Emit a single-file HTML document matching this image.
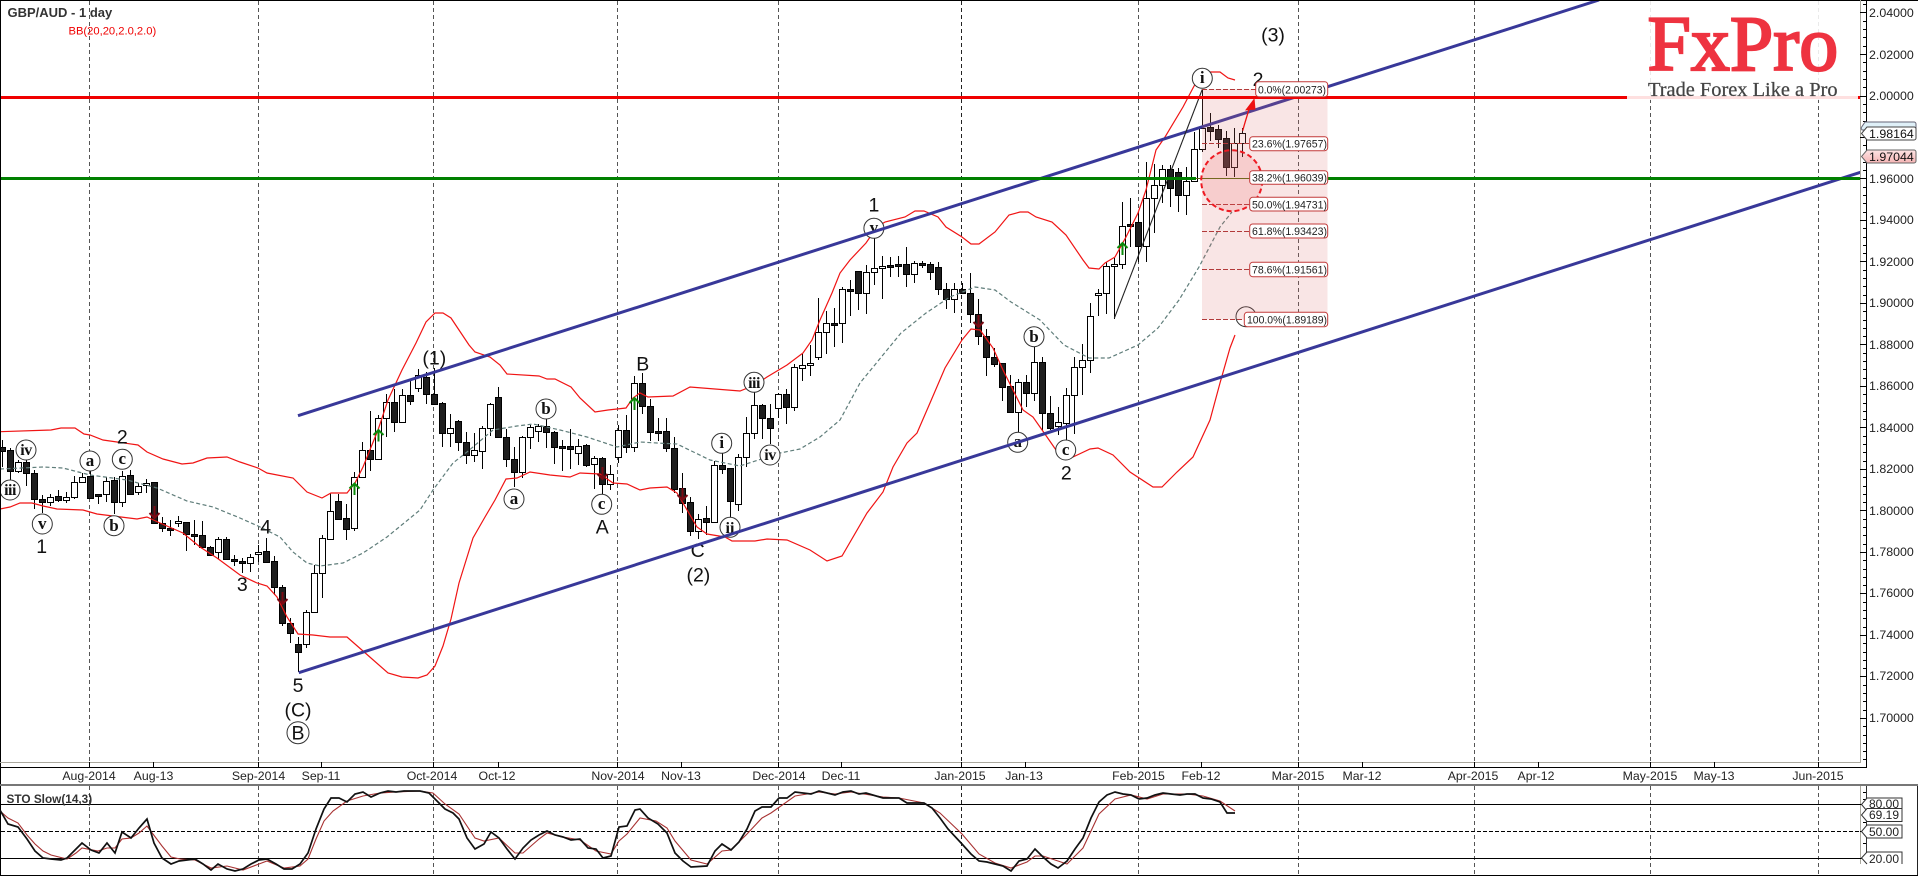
<!DOCTYPE html>
<html><head><meta charset="utf-8"><title>GBP/AUD - 1 day</title>
<style>
html,body{margin:0;padding:0;background:#fff;width:1918px;height:876px;overflow:hidden}
svg{display:block}
text{font-family:"Liberation Sans",Arial,sans-serif;fill:#111}
.ax{font-size:12.4px;fill:#222}
.dt{font-size:12.3px;text-anchor:middle;fill:#222}
.big{font-size:19.5px;text-anchor:middle;fill:#111}
.c{font-family:"Liberation Serif",serif;font-weight:bold;font-size:17px;text-anchor:middle;fill:#111}
.f{font-size:11px;fill:#222}
</style></head><body>
<svg width="1918" height="876" viewBox="0 0 1918 876" xmlns="http://www.w3.org/2000/svg">
<rect width="1918" height="876" fill="#fff"/>
<!-- grid -->
<g stroke="#555" stroke-width="1" stroke-dasharray="4 3" shape-rendering="crispEdges" fill="none">
<path d="M89.5 1V762M258.5 1V762M433.5 1V762M617.5 1V762M778.5 1V762M1138.5 1V762M1298.5 1V762M1474.5 1V762M1650.5 1V762M1818.5 1V762"/>
<path d="M89.5 786V874M258.5 786V874M433.5 786V874M617.5 786V874M778.5 786V874M1138.5 786V874M1298.5 786V874M1474.5 786V874M1650.5 786V874M1818.5 786V874"/>
<path stroke="#222" d="M961.5 1V762M961.5 786V874"/>
</g>
<!-- candles -->
<path fill="none" stroke="#000" stroke-width="1" shape-rendering="crispEdges" d="M2.5 440V467M10.5 448V480M18.5 460V473M26.5 458V486M34.5 470V509M42.5 495V513M50.5 494V506M58.5 490V502M66.5 492V503M74.5 476V499M82.5 473V483M90.5 470V499M98.5 494V504M106.5 477V502M114.5 477V514M122.5 471V507M130.5 470V495M138.5 483V495M146.5 479V493M154.5 482V524M162.5 517V532M170.5 520V536M178.5 516V527M186.5 522V551M194.5 520V545M202.5 521V547M210.5 546V556M218.5 537V559M226.5 537V560M234.5 555V566M242.5 558V573M250.5 554V572M258.5 545V562M266.5 538V563M274.5 556V595M282.5 585V626M290.5 618V643M298.5 637V672M306.5 610V648M314.5 565V613M322.5 535V598M330.5 493V540M338.5 494V520M346.5 504V540M354.5 472V531M362.5 442V478M370.5 411V471M378.5 415V460M386.5 394V437M394.5 389V432M402.5 389V423M410.5 380V405M418.5 369V392M426.5 372V404M434.5 368V405M442.5 402V447M450.5 414V447M458.5 420V451M466.5 432V464M474.5 433V462M482.5 426V469M490.5 403V436M498.5 387V438M506.5 429V467M514.5 447V487M522.5 436V478M530.5 425V449M538.5 424V442M546.5 418V448M554.5 431V464M562.5 440V471M570.5 429V469M578.5 439V465M586.5 444V467M594.5 456V489M602.5 457V495M610.5 465V490M618.5 425V463M626.5 415V453M634.5 376V452M642.5 373V414M650.5 399V441M658.5 418V441M666.5 418V452M674.5 437V493M682.5 473V513M690.5 497V536M698.5 514V539M706.5 506V535M714.5 461V523M722.5 453V474M730.5 468V517M738.5 454V511M746.5 417V467M754.5 392V439M762.5 404V439M770.5 404V444M778.5 393V418M786.5 389V424M794.5 364V411M802.5 354V381M810.5 345V376M818.5 298V360M826.5 311V354M834.5 308V347M842.5 287V343M850.5 280V316M858.5 271V310M866.5 265V314M874.5 218V285M882.5 256V299M890.5 257V277M898.5 256V277M906.5 247V287M914.5 261V283M922.5 261V268M930.5 262V280M938.5 262V295M946.5 283V309M954.5 283V313M962.5 283V294M970.5 273V323M978.5 299V345M986.5 329V376M994.5 348V367M1002.5 363V401M1010.5 375V413M1018.5 379V432M1026.5 375V407M1034.5 347V401M1042.5 357V430M1050.5 396V430M1058.5 407V435M1066.5 388V440M1074.5 357V434M1082.5 344V395M1090.5 303V373M1098.5 289V316M1106.5 262V314M1114.5 258V319M1122.5 202V269M1130.5 198V247M1138.5 212V262M1146.5 162V262M1154.5 164V233M1162.5 165V203M1170.5 165V207M1178.5 168V212M1186.5 167V215M1194.5 132V182M1202.5 89V152M1210.5 113V141M1218.5 125V148M1226.5 131V176M1234.5 128V177M1242.5 128V157"/>
<path fill="#fff" stroke="#000" stroke-width="1" shape-rendering="crispEdges" d="M15.5 462.5h6V471.5h-6zM47.5 497.5h6V502.5h-6zM63.5 497.5h6V500.5h-6zM71.5 482.5h6V497.5h-6zM79.5 477.5h6V482.5h-6zM103.5 481.5h6V494.5h-6zM119.5 476.5h6V502.5h-6zM135.5 486.5h6V492.5h-6zM143.5 483.5h6V485.5h-6zM175.5 521.5h6V523.5h-6zM215.5 539.5h6V552.5h-6zM247.5 557.5h6V563.5h-6zM255.5 552.5h6V554.5h-6zM303.5 612.5h6V644.5h-6zM311.5 573.5h6V612.5h-6zM319.5 538.5h6V573.5h-6zM327.5 511.5h6V539.5h-6zM351.5 477.5h6V528.5h-6zM359.5 450.5h6V477.5h-6zM375.5 418.5h6V459.5h-6zM383.5 402.5h6V418.5h-6zM399.5 395.5h6V422.5h-6zM415.5 375.5h6V388.5h-6zM447.5 428.5h6V433.5h-6zM471.5 450.5h6V455.5h-6zM479.5 428.5h6V451.5h-6zM487.5 404.5h6V428.5h-6zM519.5 437.5h6V472.5h-6zM527.5 427.5h6V437.5h-6zM535.5 426.5h6V431.5h-6zM575.5 446.5h6V453.5h-6zM591.5 458.5h6V464.5h-6zM607.5 474.5h6V484.5h-6zM615.5 430.5h6V457.5h-6zM631.5 383.5h6V447.5h-6zM695.5 519.5h6V531.5h-6zM711.5 465.5h6V522.5h-6zM735.5 457.5h6V504.5h-6zM743.5 433.5h6V457.5h-6zM751.5 405.5h6V433.5h-6zM775.5 394.5h6V408.5h-6zM791.5 367.5h6V407.5h-6zM799.5 365.5h6V368.5h-6zM807.5 363.5h6V365.5h-6zM815.5 332.5h6V357.5h-6zM823.5 323.5h6V332.5h-6zM839.5 289.5h6V323.5h-6zM863.5 272.5h6V293.5h-6zM871.5 268.5h6V272.5h-6zM879.5 266.5h6V268.5h-6zM911.5 263.5h6V274.5h-6zM951.5 289.5h6V299.5h-6zM1015.5 382.5h6V412.5h-6zM1031.5 362.5h6V393.5h-6zM1055.5 422.5h6V426.5h-6zM1063.5 395.5h6V423.5h-6zM1071.5 367.5h6V395.5h-6zM1079.5 360.5h6V367.5h-6zM1087.5 316.5h6V360.5h-6zM1095.5 293.5h6V295.5h-6zM1103.5 266.5h6V293.5h-6zM1111.5 264.5h6V266.5h-6zM1119.5 226.5h6V264.5h-6zM1143.5 198.5h6V246.5h-6zM1151.5 185.5h6V198.5h-6zM1159.5 169.5h6V185.5h-6zM1183.5 181.5h6V195.5h-6zM1191.5 149.5h6V181.5h-6zM1199.5 128.5h6V149.5h-6zM1231.5 143.5h6V167.5h-6zM1239.5 133.5h6V143.5h-6z"/>
<path fill="#1e1e1e" stroke="#000" stroke-width="1" shape-rendering="crispEdges" d="M-.5 447.5h6V451.5h-6zM7.5 450.5h6V471.5h-6zM23.5 462.5h6V473.5h-6zM31.5 473.5h6V499.5h-6zM39.5 499.5h6V502.5h-6zM55.5 496.5h6V500.5h-6zM87.5 476.5h6V498.5h-6zM95.5 494.5h6V496.5h-6zM111.5 480.5h6V502.5h-6zM127.5 475.5h6V494.5h-6zM151.5 482.5h6V523.5h-6zM159.5 523.5h6V528.5h-6zM167.5 528.5h6V530.5h-6zM183.5 522.5h6V534.5h-6zM191.5 534.5h6V536.5h-6zM199.5 535.5h6V547.5h-6zM207.5 547.5h6V555.5h-6zM223.5 539.5h6V559.5h-6zM231.5 559.5h6V561.5h-6zM239.5 561.5h6V563.5h-6zM263.5 551.5h6V562.5h-6zM271.5 561.5h6V587.5h-6zM279.5 587.5h6V623.5h-6zM287.5 623.5h6V633.5h-6zM295.5 644.5h6V652.5h-6zM335.5 501.5h6V519.5h-6zM343.5 518.5h6V529.5h-6zM367.5 450.5h6V459.5h-6zM391.5 402.5h6V422.5h-6zM407.5 395.5h6V401.5h-6zM423.5 377.5h6V394.5h-6zM431.5 394.5h6V404.5h-6zM439.5 403.5h6V433.5h-6zM455.5 421.5h6V442.5h-6zM463.5 442.5h6V455.5h-6zM495.5 397.5h6V437.5h-6zM503.5 437.5h6V459.5h-6zM511.5 459.5h6V472.5h-6zM543.5 426.5h6V432.5h-6zM551.5 432.5h6V447.5h-6zM559.5 446.5h6V448.5h-6zM567.5 446.5h6V449.5h-6zM583.5 445.5h6V465.5h-6zM599.5 458.5h6V484.5h-6zM623.5 430.5h6V447.5h-6zM639.5 383.5h6V406.5h-6zM647.5 406.5h6V432.5h-6zM655.5 431.5h6V433.5h-6zM663.5 431.5h6V448.5h-6zM671.5 448.5h6V489.5h-6zM679.5 488.5h6V503.5h-6zM687.5 502.5h6V531.5h-6zM703.5 518.5h6V522.5h-6zM719.5 465.5h6V469.5h-6zM727.5 468.5h6V501.5h-6zM759.5 405.5h6V418.5h-6zM767.5 418.5h6V428.5h-6zM783.5 394.5h6V407.5h-6zM831.5 323.5h6V325.5h-6zM847.5 289.5h6V291.5h-6zM855.5 271.5h6V293.5h-6zM887.5 265.5h6V267.5h-6zM895.5 264.5h6V266.5h-6zM903.5 264.5h6V274.5h-6zM919.5 263.5h6V265.5h-6zM927.5 264.5h6V272.5h-6zM935.5 267.5h6V289.5h-6zM943.5 289.5h6V299.5h-6zM959.5 289.5h6V293.5h-6zM967.5 293.5h6V314.5h-6zM975.5 314.5h6V336.5h-6zM983.5 336.5h6V357.5h-6zM991.5 357.5h6V364.5h-6zM999.5 363.5h6V387.5h-6zM1007.5 386.5h6V412.5h-6zM1023.5 382.5h6V393.5h-6zM1039.5 362.5h6V413.5h-6zM1047.5 413.5h6V428.5h-6zM1127.5 224.5h6V226.5h-6zM1135.5 222.5h6V246.5h-6zM1167.5 169.5h6V188.5h-6zM1175.5 172.5h6V195.5h-6zM1207.5 127.5h6V131.5h-6zM1215.5 129.5h6V139.5h-6zM1223.5 138.5h6V167.5h-6z"/>
<!-- Bollinger -->
<polyline fill="none" stroke="#5f7d7a" stroke-width="1.2" stroke-dasharray="4 2.5" points="0,469 43,467 63,468 90,475 127,480 157,488 187,501 213,507 240,518 258,526 280,537 293,552 307,563 320,566 343,563 363,553 387,537 420,510 433,490 453,463 467,452 493,430 517,426 533,424 560,430 587,437 617,447 640,442 657,443 677,444 710,460 740,466 780,453 800,449 820,437 840,420 860,383 901,333 926,313 950,297 975,287 995,290 1011,302 1040,320 1064,345 1089,358 1109,358 1138,345 1158,328 1179,300 1199,267 1220,227 1232,212"/>
<g fill="none" stroke="#f01414" stroke-width="1.2">
<polyline points="0,431.7 51,430 61,428 75,428 84,434 90,435 103,440 117,442 138,445 147,452 163,459 182,464 193,463 207,458 227,457 240,462 258,468 267,473 293,478 307,492 322,498 331,493 347,493 355,483 363,467 378,430 388,400 402,370 416,343 426,322 435,313 443,313 451,318 459,330 469,345 475,352 490,357 500,365 507,374 539,376 547,379 555,379 571,387 580,398 595,412 608,410 626,408 633,398 640,393 648,397 673,396 690,387 740,391 755,385 767,377 787,365 803,353 812,340 820,320 832,293 840,273 850,260 866,243 877,227 885,222 905,217 915,211 924,211 938,217 946,227 962,237 971,244 979,244 995,232 1009,215 1020,212 1028,212 1036,217 1052,222 1066,235 1083,260 1089,268 1099,269 1105,263 1115,257 1126,237 1138,213 1146,190 1156,150 1165,137 1183,107 1193,88 1202,72 1211,72 1220,72 1228,78 1235,80"/>
<polyline points="0,509 10,507 20,503 32,503 43,506 57,509 83,510 97,514 113,516 137,519 147,517 160,523 183,533 200,547 217,558 240,575 257,583 267,586 277,597 287,617 298,634 313,635 330,637 347,637 363,651 388,673 402,677 418,678 427,675 435,666 443,646 451,619 459,583 473,538 485,517 495,500 506,479 517,478 530,472 550,475 570,477 580,473 600,474 613,483 627,484 640,490 650,488 667,487 677,493 683,503 697,527 707,534 725,537 732,541 755,541 767,539 787,540 810,550 827,561 842,556 867,513 883,492 893,467 907,443 917,433 930,403 945,368 962,340 971,329 980,330 993,348 1003,370 1023,410 1033,417 1047,437 1056,450 1073,457 1090,449 1098,448 1113,455 1130,472 1153,487 1162,487 1177,472 1193,457 1210,420 1220,383 1230,348 1235,335"/>
</g>
<!-- arrows -->
<g fill="none" stroke="#0b8a0b" stroke-width="2">
<path d="M354.5 495V483M349.5 488.5L354.5 483.5L359.5 488.5"/>
<path d="M378.5 441.5V430M373.5 435L378.5 430L383.5 435"/>
<path d="M634.5 410V398M629.5 403L634.5 398L639.5 403"/>
<path d="M1122.5 255V243M1117.5 248L1122.5 243L1127.5 248"/>
</g>
<g fill="none" stroke="#7a0a14" stroke-width="2">
<path d="M154.5 506V518M149.5 513L154.5 518L159.5 513"/>
<path d="M282.5 592V604M277.5 599L282.5 604L287.5 599"/>
<path d="M602.5 467V479M597.5 474L602.5 479L607.5 474"/>
<path d="M682.5 488V500M677.5 495L682.5 500L687.5 495"/>
<path d="M978.5 315V327M973.5 322L978.5 327L983.5 322"/>
</g>
<!-- wave circles -->
<g fill="#fff" stroke="#333" stroke-width="1">
<circle cx="26" cy="450" r="10"/><circle cx="10" cy="490" r="10"/><circle cx="42.3" cy="524" r="10"/><circle cx="90" cy="461" r="10"/><circle cx="122.3" cy="459.3" r="10"/><circle cx="114" cy="525.7" r="10"/><circle cx="298" cy="732.7" r="11"/><circle cx="514" cy="499" r="10"/><circle cx="546" cy="409" r="10"/><circle cx="601.7" cy="504.3" r="10"/><circle cx="721.7" cy="443.3" r="10"/><circle cx="754" cy="382.3" r="10"/><circle cx="730" cy="527.3" r="10"/><circle cx="770" cy="455" r="10"/><circle cx="873.9" cy="228.3" r="10"/><circle cx="1017.7" cy="442.3" r="10"/><circle cx="1034" cy="336.7" r="10"/><circle cx="1065.7" cy="450" r="10"/><circle cx="1202.3" cy="78.3" r="10"/><circle cx="1246" cy="316.7" r="10"/>
</g>
<g class="w">
<text class="c" x="26" y="455" style="font-size:16px" letter-spacing="-.5">iv</text>
<text class="c" x="10" y="495" style="font-size:16px" letter-spacing="-.5">iii</text>
<text class="c" x="42.3" y="529">v</text>
<text class="c" x="90" y="466">a</text>
<text class="c" x="122.3" y="464">c</text>
<text class="c" x="114" y="531">b</text>
<text class="c" x="514" y="504">a</text>
<text class="c" x="546" y="414">b</text>
<text class="c" x="601.7" y="509">c</text>
<text class="c" x="721.7" y="448">i</text>
<text class="c" x="754" y="388" style="font-size:16px" letter-spacing="-.5">iii</text>
<text class="c" x="730" y="533" style="font-size:16px">ii</text>
<text class="c" x="770" y="460" style="font-size:16px" letter-spacing="-.5">iv</text>
<text class="c" x="873.9" y="233">v</text>
<text class="c" x="1017.7" y="447">a</text>
<text class="c" x="1034" y="342">b</text>
<text class="c" x="1065.7" y="455">c</text>
<text class="c" x="1202.3" y="83">i</text>
<text class="big" x="298" y="739.5">B</text>
<text class="big" x="41.7" y="553">1</text>
<text class="big" x="122.3" y="443.7">2</text>
<text class="big" x="242.3" y="591">3</text>
<text class="big" x="265.7" y="533.7">4</text>
<text class="big" x="298" y="692">5</text>
<text class="big" x="298" y="716.3">(C)</text>
<text class="big" x="434.3" y="364.3">(1)</text>
<text class="big" x="602.3" y="533.7">A</text>
<text class="big" x="642.7" y="370.3">B</text>
<text class="big" x="697.7" y="557">C</text>
<text class="big" x="698.4" y="581.3">(2)</text>
<text class="big" x="873.9" y="211.3">1</text>
<text class="big" x="1066.3" y="479.7">2</text>
<text class="big" x="1258" y="86">2</text>
<text class="big" x="1273" y="41.5">(3)</text>
</g>
<!-- channel -->
<g stroke="#383899" stroke-width="3" fill="none">
<path d="M298 415.7L1599 0"/>
<path d="M298.8 672.7L1860.4 172.3"/>
</g>
<!-- fib -->
<rect x="1202" y="89" width="125.5" height="230.5" fill="#dc6e6e" fill-opacity=".18"/>
<path d="M1114.3 318.3L1202.3 89.3" stroke="#222" stroke-width="1.1" fill="none"/>
<g shape-rendering="crispEdges">
<rect x="1" y="96" width="1859" height="3" fill="#f00000"/>
<rect x="1" y="177" width="1195" height="3" fill="#008000"/>
<rect x="1327" y="177" width="533" height="3" fill="#008000"/>
<rect x="1196" y="178" width="66" height="1" fill="#5a6a10"/>
</g>
<path d="M1202 89.5H1256M1202 143.5H1250M1202 204.5H1250M1202 231.5H1250M1202 269.5H1250M1202 319.5H1245" stroke="#b23a3a" stroke-width="1" stroke-dasharray="5 2" fill="none" shape-rendering="crispEdges"/>
<circle cx="1231.7" cy="180.7" r="30.5" fill="#ee6464" fill-opacity=".18" stroke="#ee1a22" stroke-width="2" stroke-dasharray="5 3"/>
<path d="M1242.7 130.7C1245 122 1248 113 1250 106" stroke="#ee1111" stroke-width="1.3" fill="none"/>
<path d="M1254.5 98L1245 110.5L1255.5 109.5Z" fill="#ee1111"/>
<g fill="#fff" stroke="#c23a3a" stroke-width="1">
<rect x="1255.7" y="81.7" width="72" height="15" rx="3"/>
<rect x="1249.7" y="136.7" width="78" height="14" rx="3"/>
<rect x="1249.7" y="170.7" width="78" height="13.6" rx="3"/>
<rect x="1249.7" y="197.3" width="78" height="13.7" rx="3"/>
<rect x="1249.7" y="224" width="78" height="14" rx="3"/>
<rect x="1249.7" y="262.3" width="78" height="14.4" rx="3"/>
<rect x="1244.3" y="312.3" width="83.4" height="14.4" rx="3"/>
</g>
<g>
<text class="f" x="1258" y="93.5" textLength="68" lengthAdjust="spacingAndGlyphs">0.0%(2.00273)</text>
<text class="f" x="1252" y="147.7" textLength="75" lengthAdjust="spacingAndGlyphs">23.6%(1.97657)</text>
<text class="f" x="1252" y="181.5" textLength="75" lengthAdjust="spacingAndGlyphs">38.2%(1.96039)</text>
<text class="f" x="1252" y="208.3" textLength="75" lengthAdjust="spacingAndGlyphs">50.0%(1.94731)</text>
<text class="f" x="1252" y="235" textLength="75" lengthAdjust="spacingAndGlyphs">61.8%(1.93423)</text>
<text class="f" x="1252" y="273.3" textLength="75" lengthAdjust="spacingAndGlyphs">78.6%(1.91561)</text>
<text class="f" x="1247" y="323.3" textLength="80" lengthAdjust="spacingAndGlyphs">100.0%(1.89189)</text>
</g>
<!-- logo -->
<rect x="1627" y="1" width="231" height="99" fill="#fff" fill-opacity=".88"/>
<text x="1647.5" y="70" font-size="78" style="font-family:'Liberation Serif',serif;fill:#ee3340;stroke:#ee3340;stroke-width:2.2">FxPro</text>
<text x="1648" y="96" font-size="20.4" style="font-family:'Liberation Serif',serif;fill:#444;stroke:#444;stroke-width:.25">Trade Forex Like a Pro</text>
<!-- frame -->
<g shape-rendering="crispEdges">
<rect x="0" y="0" width="1918" height="1" fill="#000"/>
<rect x="0" y="0" width="1" height="876" fill="#000"/>
<rect x="1917" y="785" width="1" height="91" fill="#222"/>
<rect x="0" y="762" width="1860" height="1" fill="#aaa89e"/>
<rect x="0" y="767" width="1866" height="1" fill="#000"/>
<rect x="0" y="784" width="1918" height="2" fill="#777"/>
<rect x="0" y="875" width="1918" height="1" fill="#000"/>
<rect x="1860" y="0" width="1" height="763" fill="#aaa89e"/>
<rect x="1860" y="786" width="1" height="78" fill="#aaa89e"/>
<rect x="1866" y="0" width="1" height="768" fill="#000"/>
<rect x="1866" y="786" width="1" height="78" fill="#333"/>
</g>
<path stroke="#000" stroke-width="1" shape-rendering="crispEdges" fill="none" d="M89.5 762V767M153.5 762V767M258.5 762V767M321.5 762V767M433.5 762V767M498.5 762V767M617.5 762V767M681.5 762V767M778.5 762V767M841.5 762V767M961.5 762V767M1025.5 762V767M1138.5 762V767M1201.5 762V767M1298.5 762V767M1362.5 762V767M1474.5 762V767M1538.5 762V767M1650.5 762V767M1714.5 762V767M1818.5 762V767"/>
<!-- axis ticks -->
<path stroke="#000" stroke-width="1" shape-rendering="crispEdges" fill="none" d="M1860 12.5H1866M1860 54.5H1866M1860 96.5H1866M1860 137.5H1866M1860 178.5H1866M1860 220.5H1866M1860 261.5H1866M1860 303.5H1866M1860 344.5H1866M1860 386.5H1866M1860 427.5H1866M1860 469.5H1866M1860 510.5H1866M1860 552.5H1866M1860 593.5H1866M1860 635.5H1866M1860 676.5H1866M1860 718.5H1866"/>
<path stroke="#000" stroke-width="1" shape-rendering="crispEdges" fill="none" d="M1863 4.5H1866M1863 21.5H1866M1863 29.5H1866M1863 37.5H1866M1863 46.5H1866M1863 62.5H1866M1863 71.5H1866M1863 79.5H1866M1863 87.5H1866M1863 104.5H1866M1863 112.5H1866M1863 121.5H1866M1863 129.5H1866M1863 145.5H1866M1863 154.5H1866M1863 162.5H1866M1863 170.5H1866M1863 187.5H1866M1863 195.5H1866M1863 203.5H1866M1863 212.5H1866M1863 228.5H1866M1863 237.5H1866M1863 245.5H1866M1863 253.5H1866M1863 270.5H1866M1863 278.5H1866M1863 286.5H1866M1863 295.5H1866M1863 311.5H1866M1863 320.5H1866M1863 328.5H1866M1863 336.5H1866M1863 353.5H1866M1863 361.5H1866M1863 369.5H1866M1863 378.5H1866M1863 394.5H1866M1863 403.5H1866M1863 411.5H1866M1863 419.5H1866M1863 436.5H1866M1863 444.5H1866M1863 452.5H1866M1863 461.5H1866M1863 477.5H1866M1863 486.5H1866M1863 494.5H1866M1863 502.5H1866M1863 519.5H1866M1863 527.5H1866M1863 535.5H1866M1863 544.5H1866M1863 560.5H1866M1863 569.5H1866M1863 577.5H1866M1863 585.5H1866M1863 602.5H1866M1863 610.5H1866M1863 618.5H1866M1863 627.5H1866M1863 643.5H1866M1863 652.5H1866M1863 660.5H1866M1863 668.5H1866M1863 685.5H1866M1863 693.5H1866M1863 701.5H1866M1863 710.5H1866M1863 726.5H1866M1863 735.5H1866M1863 743.5H1866M1863 751.5H1866M1863 759.5H1866M1863 792.5H1866M1863 799.5H1866M1863 822.5H1866M1863 843.5H1866M1860 804.5H1866M1860 831.5H1866M1860 858.5H1866"/>
<g class="a">
<text class="ax" x="1869" y="17">2.04000</text>
<text class="ax" x="1869" y="59">2.02000</text>
<text class="ax" x="1869" y="100">2.00000</text>
<text class="ax" x="1869" y="183">1.96000</text>
<text class="ax" x="1869" y="224">1.94000</text>
<text class="ax" x="1869" y="266">1.92000</text>
<text class="ax" x="1869" y="307">1.90000</text>
<text class="ax" x="1869" y="349">1.88000</text>
<text class="ax" x="1869" y="390">1.86000</text>
<text class="ax" x="1869" y="432">1.84000</text>
<text class="ax" x="1869" y="473">1.82000</text>
<text class="ax" x="1869" y="515">1.80000</text>
<text class="ax" x="1869" y="556">1.78000</text>
<text class="ax" x="1869" y="597">1.76000</text>
<text class="ax" x="1869" y="639">1.74000</text>
<text class="ax" x="1869" y="680">1.72000</text>
<text class="ax" x="1869" y="722">1.70000</text>
</g>
<!-- price tags -->
<path d="M1865 122H1914a2 2 0 0 1 2 2V130H1862L1861 128Z" fill="#dff0f8" stroke="#667" stroke-width="1"/>
<path d="M1867 127H1914a2 2 0 0 1 2 2V138a2 2 0 0 1-2 2H1867L1861.5 133.5Z" fill="#fff" stroke="#444" stroke-width="1"/>
<text class="ax" x="1869" y="138" style="fill:#111">1.98164</text>
<defs><linearGradient id="pk" x1="0" y1="0" x2="0" y2="1"><stop offset="0" stop-color="#fde4e4"/><stop offset="1" stop-color="#f5b4b4"/></linearGradient></defs>
<path d="M1867 150H1914a2 2 0 0 1 2 2V161a2 2 0 0 1-2 2H1867L1861.5 156.5Z" fill="url(#pk)" stroke="#666" stroke-width="1"/>
<text class="ax" x="1869" y="161" style="fill:#111">1.97044</text>
<!-- dates -->
<g>
<text class="dt" x="89" y="780">Aug-2014</text><text class="dt" x="153.5" y="780">Aug-13</text><text class="dt" x="258.5" y="780">Sep-2014</text><text class="dt" x="321" y="780">Sep-11</text><text class="dt" x="432" y="780">Oct-2014</text><text class="dt" x="497" y="780">Oct-12</text><text class="dt" x="618" y="780">Nov-2014</text><text class="dt" x="681" y="780">Nov-13</text><text class="dt" x="779" y="780">Dec-2014</text><text class="dt" x="841" y="780">Dec-11</text><text class="dt" x="960" y="780">Jan-2015</text><text class="dt" x="1024" y="780">Jan-13</text><text class="dt" x="1138.5" y="780">Feb-2015</text><text class="dt" x="1201" y="780">Feb-12</text><text class="dt" x="1298" y="780">Mar-2015</text><text class="dt" x="1362" y="780">Mar-12</text><text class="dt" x="1473" y="780">Apr-2015</text><text class="dt" x="1536" y="780">Apr-12</text><text class="dt" x="1650" y="780">May-2015</text><text class="dt" x="1714" y="780">May-13</text><text class="dt" x="1818" y="780">Jun-2015</text>
</g>
<!-- STO -->
<g shape-rendering="crispEdges" fill="none" stroke="#000" stroke-width="1">
<path d="M1 804.5H1860M1 858.5H1860"/>
<path d="M1 831.5H1860" stroke-dasharray="4 2"/>
</g>
<polyline fill="none" stroke="#a83232" stroke-width="1.1" points="0,811 8,818 18,823 27,835 35,844 43,851 51,855 67,859 76,853 82,848 98,851 107,848 115,848 122,839 131,838 139,833 147,826 162,846 171,857 180,859 195,860 211,868 227,866 243,870 259,864 267,861 284,868 300,866 308,859 316,839 324,821 333,811 347,801 363,796 380,793 396,792 420,791 433,793 445,804 459,814 475,838 484,841 499,838 515,853 523,853 539,839 547,833 563,837 580,840 596,851 611,854 619,841 627,834 640,818 656,821 667,828 675,841 691,860 707,864 722,851 731,850 747,834 762,818 771,813 795,796 819,792 835,794 851,792 883,797 899,798 924,803 940,813 962,834 979,854 995,863 1011,868 1027,862 1035,856 1043,856 1067,864 1083,848 1099,814 1115,799 1131,795 1147,799 1163,794 1187,794 1203,796 1220,801 1235,811"/>
<polyline fill="none" stroke="#111" stroke-width="1.7" points="0,810 8,824 18,827 27,839 35,851 43,858 51,859 61,860 67,858 76,849 82,843 91,850 99,853 107,843 115,853 122,832 131,838 139,828 147,819 154,843 162,858 171,864 179,861 195,859 203,864 211,870 218,864 227,869 235,871 243,869 251,864 259,860 267,859 276,864 284,869 292,869 300,864 308,853 316,829 324,809 331,798 339,798 347,802 355,794 363,792 371,797 380,793 388,791 396,792 404,791 420,791 429,793 437,801 445,809 453,813 459,819 467,838 475,849 484,844 491,832 499,838 507,849 515,859 523,848 531,840 539,835 547,831 555,835 563,837 571,840 580,839 588,848 596,849 603,858 611,856 619,827 627,826 635,810 640,809 648,818 658,824 667,833 675,853 683,861 691,867 707,866 715,851 722,844 731,850 739,842 747,829 755,811 762,807 771,807 779,798 787,798 795,792 811,794 819,791 835,795 843,792 851,791 859,794 866,793 883,798 899,798 907,803 924,803 932,808 940,818 948,829 962,844 971,854 979,861 987,862 995,864 1003,866 1011,871 1019,861 1027,859 1035,849 1043,857 1051,864 1058,868 1067,861 1075,849 1083,838 1091,818 1099,802 1107,795 1115,792 1123,794 1131,795 1139,799 1147,798 1155,795 1163,793 1171,794 1180,795 1187,794 1195,794 1203,798 1211,799 1220,802 1227,813 1235,813"/>
<g fill="#fff" stroke="#333" stroke-width="1">
<path d="M1867 798H1902V811H1867L1861.5 804.5Z"/>
<path d="M1867 808.5H1902V821.5H1867L1861.5 815Z"/>
<path d="M1867 825H1902V838H1867L1861.5 831.5Z"/>
<path d="M1867 852H1902V864M1867 864L1861.5 858L1867 852"/>
</g>
<g>
<text class="ax" x="1869" y="808" style="font-size:12px">80.00</text>
<text class="ax" x="1869" y="819" style="font-size:12px">69.19</text>
<text class="ax" x="1869" y="836" style="font-size:12px">50.00</text>
<text class="ax" x="1869" y="863" style="font-size:12px">20.00</text>
</g>
<text x="6.5" y="803" font-size="11.8" font-weight="bold" style="fill:#333">STO Slow(14,3)</text>
<text x="7.5" y="17" font-size="13" font-weight="bold" style="fill:#333">GBP/AUD - 1 day</text>
<text x="68.5" y="34.5" font-size="11.2" style="fill:#f00000">BB(20,20,2.0,2.0)</text>
</svg>
</body></html>
